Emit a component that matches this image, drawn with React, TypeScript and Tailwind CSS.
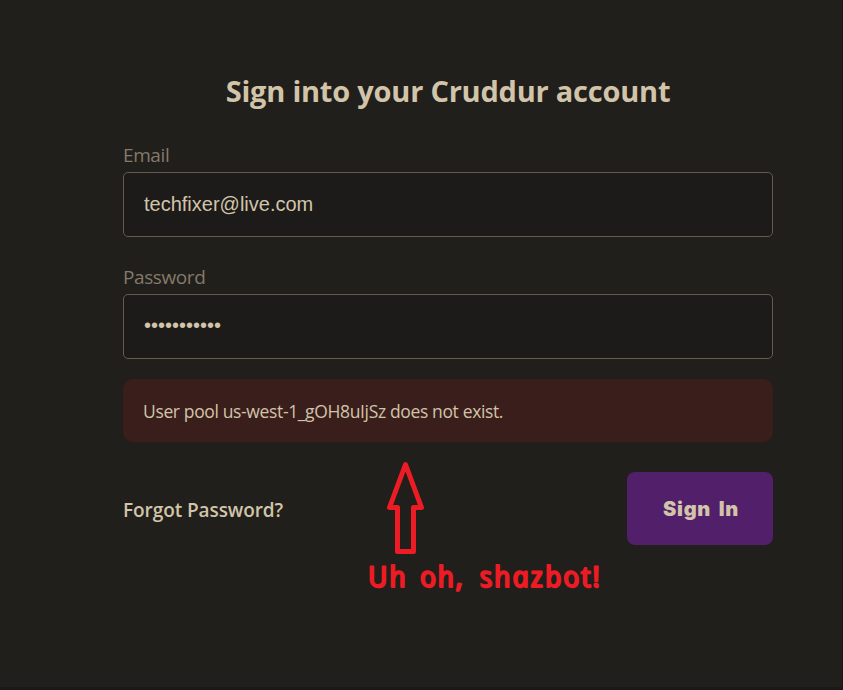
import React from "react";

function Field({ label, type, value }: { label: string; type: string; value: string }) {
  return (
    <label className="flex flex-col">
      <span className="pt-px font-['Open_Sans','Noto_Sans',sans-serif] text-[19px] leading-[27px] tracking-[-0.4px] text-[#85796a]">
        {label}
      </span>
      <input
        type={type}
        defaultValue={value}
        className={`mt-[3px] h-[65px] rounded-[5px] border border-[#655b4e] bg-[#1c1b1a] px-[20px] font-['Liberation_Sans',Arial,sans-serif] text-[20px] text-[#d2c4a9] outline-none ${type === "password" ? "pb-[2px]" : "pb-0"}`}
      />
    </label>
  );
}

const caption = [
  { word: "Uh", x: 0, width: 38 },
  { word: "oh,", x: 52, width: 43 },
  { word: "shazbot!", x: 112, width: 120 },
];

export default function App() {
  return (
    <main className="relative h-[690px] w-[843px] overflow-hidden border-r border-b-[3px] border-[#1b181b] bg-[#201f1b] pl-[123px] pt-[69px] text-[#d2c4a9]">
      <form className="flex w-[650px] flex-col">
        <h1 className="h-[72px] whitespace-nowrap text-center font-['Open_Sans','Noto_Sans',sans-serif] text-[29px] font-bold leading-[43px] tracking-[-0.22px]">
          Sign into your Cruddur account
        </h1>
        <div className="flex flex-col gap-[26px]">
          <Field label="Email" type="text" value="techfixer@live.com" />
          <Field label="Password" type="password" value="abcdefghijk" />
        </div>
        <div className="mt-[20px] flex h-[63px] items-center rounded-[10px] bg-[#3a1e1c] px-[20px] pt-[2px] font-['Open_Sans','Noto_Sans',sans-serif] text-[17.5px] tracking-[-0.36px]">
          User pool us-west-1_gOH8uIjSz does not exist.
        </div>
        <div className="mt-[30px] flex h-[73px] items-center justify-between">
          <a className="pt-[4px] font-['Open_Sans','Noto_Sans',sans-serif] text-[19px] font-semibold tracking-[-0.08px]">
            Forgot Password?
          </a>
          <button
            type="button"
            className="h-[73px] w-[146px] rounded-[8px] bg-[#521f6b] pl-[2px] font-['Inter',sans-serif] text-[20px] font-black tracking-[0.7px] [word-spacing:3px]"
          >
            Sign In
          </button>
        </div>
      </form>
      <svg className="absolute left-[360px] top-[450px]" width="260" height="160" fill="none">
        <path
          d="M45.5 14.5 L29.5 57.5 H37.5 V101.5 H53.5 V57.5 H61.5 Z"
          stroke="#ed1c24"
          strokeWidth="5"
          strokeLinejoin="round"
        />
        <g transform="translate(9.5 137) skewX(12)">
          {caption.map(({ word, x, width }) => (
            <text
              key={word}
              x={x}
              y="0"
              textLength={width}
              fill="#ed1c24"
              stroke="#ed1c24"
              strokeWidth="1.8"
              strokeLinejoin="round"
              className="font-['Noto_Sans',sans-serif] text-[29px] font-normal italic"
            >
              {word}
            </text>
          ))}
        </g>
      </svg>
    </main>
  );
}
